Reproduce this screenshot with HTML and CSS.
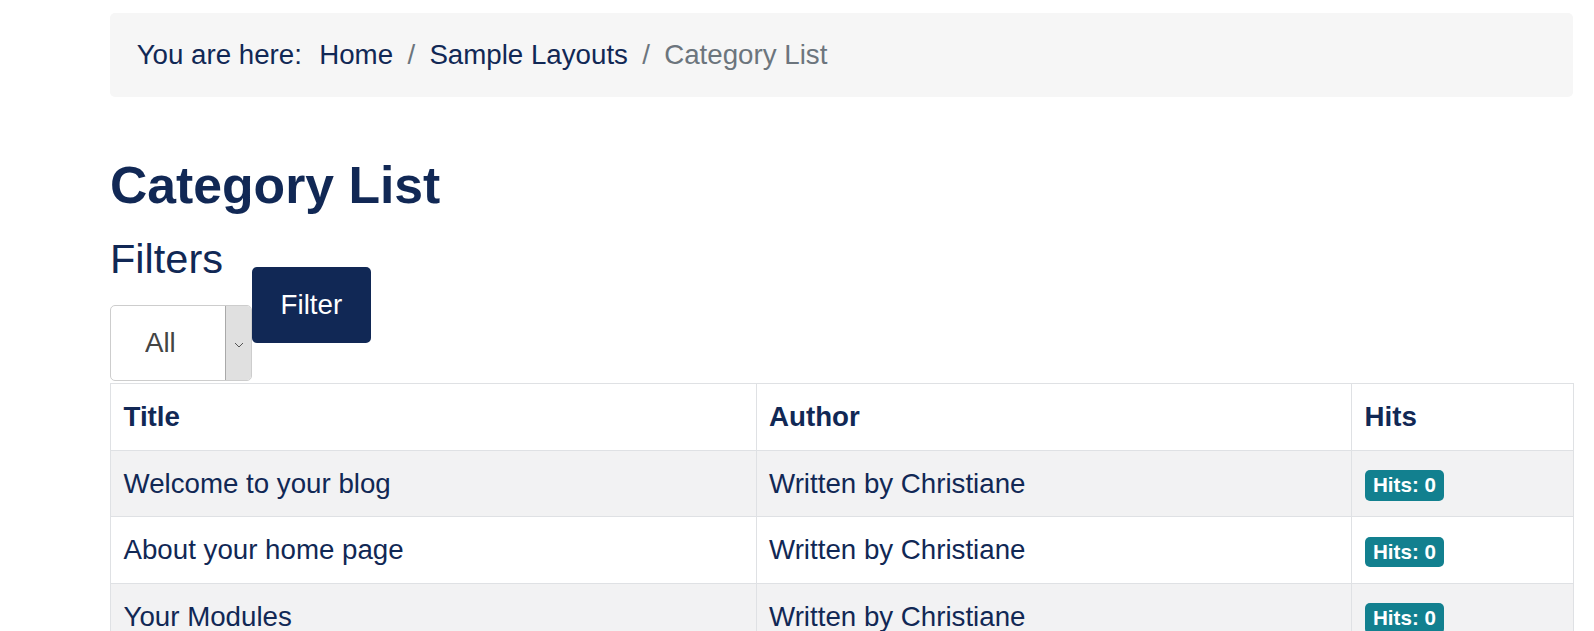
FILE: index.html
```html
<!DOCTYPE html>
<html lang="en">
<head>
<meta charset="utf-8">
<title>Category List</title>
<link rel="stylesheet" href="styles.css">
</head>
<body>
<main class="page">
  <nav class="breadcrumb">
    <span class="here">You are here:</span>
    <a class="crumb" href="#">Home</a>
    <span class="sep">/</span>
    <a class="crumb" href="#">Sample Layouts</a>
    <span class="sep">/</span>
    <span class="current">Category List</span>
  </nav>

  <h1 class="title">Category List</h1>

  <form class="filters">
    <div class="filter-col">
      <h2 class="filters-label">Filters</h2>
      <div class="select-wrap">
        <select class="select"><option>All</option></select>
        <span class="select-arrow">
          <svg width="10" height="6" viewBox="0 0 10 6"><path d="M1 1 L5 5 L9 1" fill="none" stroke="#555" stroke-width="1"/></svg>
        </span>
      </div>
    </div>
    <button class="btn" type="button">Filter</button>
  </form>

  <table class="list">
    <thead>
      <tr><th class="c1">Title</th><th class="c2">Author</th><th class="c3">Hits</th></tr>
    </thead>
    <tbody>
      <tr class="odd"><td>Welcome to your blog</td><td>Written by Christiane</td><td><span class="badge">Hits: 0</span></td></tr>
      <tr><td>About your home page</td><td>Written by Christiane</td><td><span class="badge">Hits: 0</span></td></tr>
      <tr class="odd"><td>Your Modules</td><td>Written by Christiane</td><td><span class="badge">Hits: 0</span></td></tr>
    </tbody>
  </table>
</main>
</body>
</html>
```

FILE: styles.css
```css
* { box-sizing: border-box; }
html, body { margin: 0; padding: 0; background: #fff; }
body {
  font-family: "Liberation Sans", Arial, sans-serif;
  font-size: 27.7px;
  line-height: 1.5;
  color: #112855;
  overflow: hidden;
}
.page {
  margin-left: 110px;
  width: 1463px;
  padding-top: 13px;
}
.breadcrumb {
  background: #f6f6f6;
  border-radius: 5px;
  padding: 0 26.7px;
  height: 83.5px;
  display: flex;
  align-items: center;
  white-space: nowrap;
}
.here { margin-right: 17.3px; }
.crumb { color: #112855; text-decoration: none; }
.sep { color: #6c757d; padding: 0 14.3px; }
.current { color: #6c757d; }

.title {
  font-size: 51.7px;
  line-height: 1.2;
  font-weight: 700;
  margin: 57px 0 0;
}
.filters {
  display: flex;
  align-items: flex-start;
  margin-top: 18.5px;
}
.filter-col { display: flex; flex-direction: column; }
.filters-label {
  font-size: 41.5px;
  line-height: 1.2;
  font-weight: 400;
  margin: 0 0 21.4px;
}
.select-wrap {
  display: flex;
  width: 142px;
  height: 76px;
  border: 1px solid #cdcdcd;
  border-radius: 5px;
  overflow: hidden;
  background: #fff;
}
.select {
  appearance: none;
  -webkit-appearance: none;
  border: 0;
  background: transparent;
  font: inherit;
  color: #444;
  padding: 0 0 0 34px;
  flex: 1;
  min-width: 0;
  outline: none;
}
.select-arrow {
  width: 26px;
  background: #e0e0e0;
  border-left: 1px solid #a9a9a9;
  display: flex;
  align-items: center;
  justify-content: center;
  padding-top: 4px;
}
.btn {
  margin-top: 32.5px;
  background: #112855;
  color: #fff;
  border: 0;
  border-radius: 5px;
  font: inherit;
  width: 118.7px;
  height: 76.7px;
  padding: 0;
}
.list {
  width: 1463px;
  margin-top: 1.6px;
  border-collapse: collapse;
  table-layout: fixed;
  border: 1px solid #dfe1e4;
}
.list th, .list td {
  height: 66.7px;
  padding: 0 12.5px;
  text-align: left;
  vertical-align: middle;
  border: 1px solid #dfe1e4;
  white-space: nowrap;
}
.list th { font-weight: 700; }
.c1 { width: 645.5px; }
.c2 { width: 595.5px; }
.c3 { width: 222px; }
.list tr.odd td { background: #f2f2f3; }
.badge {
  display: inline-block;
  background: #12808f;
  color: #fff;
  font-size: 20.6px;
  font-weight: 700;
  line-height: 30.7px;
  height: 30.7px;
  padding: 0 8.5px;
  border-radius: 5px;
  vertical-align: middle;
}
```
